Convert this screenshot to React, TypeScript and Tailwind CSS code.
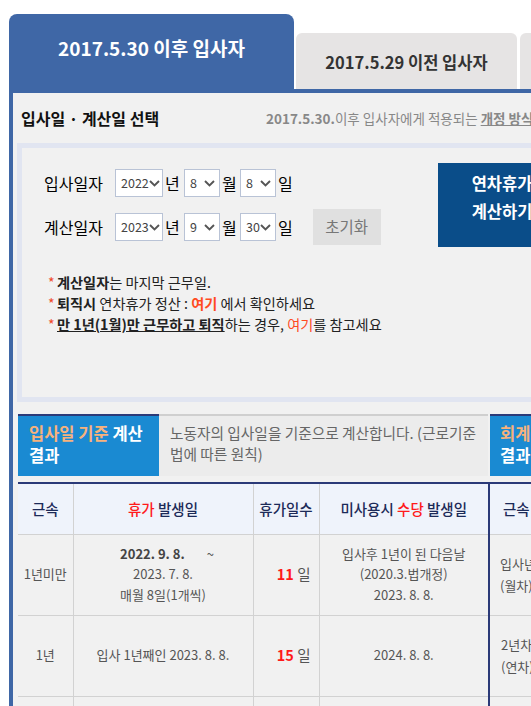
import type { ReactNode } from "react";

function Chevron() {
  return (
    <svg width="11" height="7" viewBox="0 0 11 7" className="shrink-0">
      <path d="M1 1l4.5 4.5L10 1" fill="none" stroke="#555" strokeWidth="1.9" />
    </svg>
  );
}

function FakeSelect({ value, width }: { value: string; width: string }) {
  return (
    <div
      className={`${width} flex h-[28px] items-center justify-between border border-[#b9c3d6] bg-white pl-[5px] pr-[4px] text-[12.5px] text-[#444]`}
    >
      <span>{value}</span>
      <Chevron />
    </div>
  );
}

function DateRow({ label, y, m, d, extra }: { label: string; y: string; m: string; d: string; extra?: ReactNode }) {
  return (
    <div className="flex h-[28px] items-center text-[16px] text-[#000]">
      <span className="w-[71px]">{label}</span>
      <FakeSelect value={y} width="w-[48px]" />
      <span className="w-[21px] pl-[2px]">년</span>
      <FakeSelect value={m} width="w-[36px]" />
      <span className="w-[20px] pl-[2px]">월</span>
      <FakeSelect value={d} width="w-[36px]" />
      <span className="pl-[2px]">일</span>
      {extra}
    </div>
  );
}

function Note({ children }: { children: ReactNode }) {
  return (
    <div className="flex h-[21px] items-center text-[14.2px] text-[#222]">
      <span className="w-[9px] text-[#f04a2a]">*</span>
      <span>{children}</span>
    </div>
  );
}

const cell = "border-r border-b border-[#d2d2d2] text-center align-middle";

export default function App() {
  return (
    <div className="h-[706px] w-[531px] overflow-hidden bg-white [font-family:'Noto_Sans_CJK_KR','Noto_Sans',sans-serif]">
      <div className="w-[800px] pl-[9px] pt-[14px]">
        {/* tabs */}
        <div className="flex h-[75px] items-end">
          <div className="flex h-[75px] w-[285px] items-center justify-center rounded-t-[8px] bg-[#3f67a6] pb-[6px] text-[19px] font-bold text-white">
            2017.5.30 이후 입사자
          </div>
          <div className="ml-[2px] flex h-[56px] w-[221px] items-center justify-center rounded-t-[6px] bg-[#e6e4e4] pt-[3px] text-[16.5px] font-bold text-[#333]">
            2017.5.29 이전 입사자
          </div>
          <div className="ml-[3px] h-[56px] w-[221px] rounded-t-[6px] bg-[#e6e4e4]" />
        </div>

        {/* content */}
        <div className="h-[640px] border-l-4 border-t-4 border-[#3f67a6] bg-[#f1f1f1]">
          <div className="flex h-[50px] items-center whitespace-nowrap pl-[8px]">
            <span className="w-[245px] text-[16px] font-semibold text-[#111]">입사일 · 계산일 선택</span>
            <span className="text-[13.5px] text-[#888]">
              <b>2017.5.30.</b>이후 입사자에게 적용되는 <b className="underline">개정 방식</b>으로 계산됩니다.
            </span>
          </div>

          <div className="ml-[4px] flex h-[259px] border-[5px] border-[#e1e5f1] pl-[22px] pt-[15px]">
            <div className="w-[394px] pt-[6px]">
              <DateRow label="입사일자" y="2022" m="8" d="8" />
              <div className="mt-[16px]">
                <DateRow
                  label="계산일자"
                  y="2023"
                  m="9"
                  d="30"
                  extra={
                    <div className="ml-[20px] flex h-[36px] w-[68px] items-center justify-center bg-[#e0e0e0] text-[15.5px] text-[#777]">
                      초기화
                    </div>
                  }
                />
              </div>
              <div className="ml-[4px] mt-[31px] whitespace-nowrap">
                <Note>
                  <b>계산일자</b>는 마지막 근무일.
                </Note>
                <Note>
                  <b>퇴직시</b> 연차휴가 정산 : <b className="font-semibold text-[#ff4b1f]">여기</b> 에서 확인하세요
                </Note>
                <Note>
                  <b className="underline">만 1년(1월)만 근무하고 퇴직</b>하는 경우, <span className="text-[#ff4b1f]">여기</span>를 참고세요
                </Note>
              </div>
            </div>
            <div className="h-[84px] w-[126px] bg-[#0a4d89] pl-[2px] pt-[6px] text-center text-[16.5px] font-bold leading-[28px] text-white">
              연차휴가
              <br />
              계산하기
            </div>
          </div>

          {/* section headers */}
          <div className="ml-[5px] mt-[12px] flex h-[62px]">
            <div className="w-[141px] whitespace-nowrap border-t-2 border-[#2b3a78] bg-[#1a8ad2] pl-[11px] pt-[6px] text-[16.5px] font-bold leading-[22px] text-white">
              <span className="text-[#f7b27c]">입사일 기준</span> 계산
              <br />
              결과
            </div>
            <div className="w-[329px] whitespace-nowrap border-t-2 border-[#cfcfcf] bg-[#ececec] pl-[11px] pt-[6px] text-[14.7px] leading-[21px] text-[#666]">
              노동자의 입사일을 기준으로 계산합니다. (근로기준
              <br />
              법에 따른 원칙)
            </div>
            <div className="ml-[2px] w-[141px] whitespace-nowrap border-t-2 border-[#2b3a78] bg-[#1a8ad2] pl-[10px] pt-[6px] text-[16.5px] font-bold leading-[22px] text-white">
              <span className="text-[#f7b27c]">회계연도</span> 기준
              <br />
              결과
            </div>
          </div>

          {/* tables */}
          <div className="ml-[5px] mt-[6px] flex border-t-2 border-[#2b3a78]">
            <table className="w-[470px] table-fixed border-collapse text-[13px] text-[#555]">
              <colgroup>
                <col className="w-[55px]" />
                <col className="w-[180px]" />
                <col className="w-[66px]" />
                <col className="w-[169px]" />
              </colgroup>
              <thead>
                <tr className="h-[50px] bg-[#eff3fb] text-[14.5px] text-[#1c2a58]">
                  <th className={`${cell} font-medium`}>근속</th>
                  <th className={`${cell} font-medium`}>
                    <span className="text-[#ff1a1a]">휴가</span> 발생일
                  </th>
                  <th className={`${cell} font-medium`}>휴가일수</th>
                  <th className="border-b border-[#d2d2d2] text-center font-medium">
                    미사용시 <span className="text-[#ff1a1a]">수당</span> 발생일
                  </th>
                </tr>
              </thead>
              <tbody className="leading-[20.5px]">
                <tr className="h-[81px]">
                  <td className={cell}>1년미만</td>
                  <td className={cell}>
                    <b className="pl-[8px] text-[#444]">2022. 9. 8.</b>
                    <span className="pl-[22px]">~</span>
                    <br />
                    2023. 7. 8.
                    <br />
                    매월 8일(1개씩)
                  </td>
                  <td className={`${cell} !text-right pr-[8px] text-[14.5px]`}>
                    <b className="text-[#ff1a1a]">11</b> 일
                  </td>
                  <td className="border-b border-[#d2d2d2] text-center">
                    입사후 1년이 된 다음날
                    <br />
                    (2020.3.법개정)
                    <br />
                    2023. 8. 8.
                  </td>
                </tr>
                <tr className="h-[81px]">
                  <td className={cell}>1년</td>
                  <td className={cell}>입사 1년째인 2023. 8. 8.</td>
                  <td className={`${cell} !text-right pr-[8px] text-[14.5px]`}>
                    <b className="text-[#ff1a1a]">15</b> 일
                  </td>
                  <td className="border-b border-[#d2d2d2] text-center">2024. 8. 8.</td>
                </tr>
                <tr className="h-[81px]">
                  <td className={cell}>2년</td>
                  <td className={cell}>2024. 8. 8.</td>
                  <td className={`${cell} !text-right pr-[8px] text-[14.5px]`}>
                    <b className="text-[#ff1a1a]">15</b> 일
                  </td>
                  <td className="border-b border-[#d2d2d2] text-center">2025. 8. 8.</td>
                </tr>
              </tbody>
            </table>
            <table className="w-[300px] table-fixed border-collapse border-l-2 border-[#2b3a78] text-[13px] text-[#555]">
              <colgroup>
                <col className="w-[90px]" />
                <col className="w-[210px]" />
              </colgroup>
              <thead>
                <tr className="h-[50px] bg-[#eff3fb] text-[14.5px] text-[#1c2a58]">
                  <th className="border-b border-[#d2d2d2] pl-[13px] text-left font-medium">근속</th>
                  <th className="border-b border-[#d2d2d2] font-medium">휴가 발생일</th>
                </tr>
              </thead>
              <tbody className="leading-[22px]">
                <tr className="h-[81px]">
                  <td className="whitespace-nowrap border-b border-[#d2d2d2] pl-[10px]">
                    입사년도
                    <br />
                    (월차)
                  </td>
                  <td className="border-b border-[#d2d2d2]" />
                </tr>
                <tr className="h-[81px]">
                  <td className="whitespace-nowrap border-b border-[#d2d2d2] pl-[11px]">
                    2년차
                    <br />
                    (연차)
                  </td>
                  <td className="border-b border-[#d2d2d2]" />
                </tr>
                <tr className="h-[81px]">
                  <td className="border-b border-[#d2d2d2]" />
                  <td className="border-b border-[#d2d2d2]" />
                </tr>
              </tbody>
            </table>
          </div>
        </div>
      </div>
    </div>
  );
}
